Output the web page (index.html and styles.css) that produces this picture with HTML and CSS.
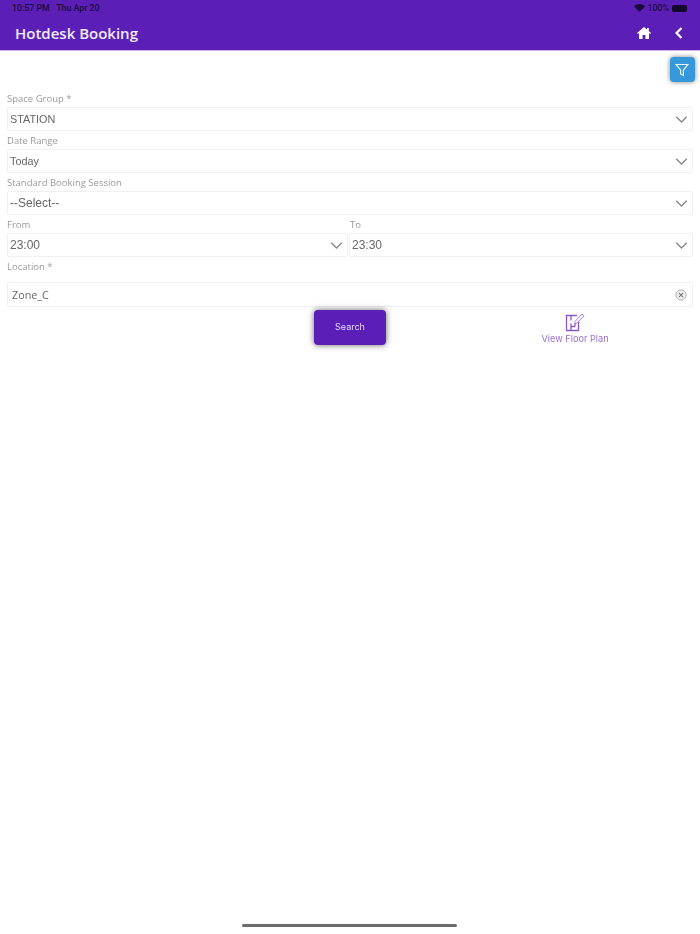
FILE: index.html
```html
<!DOCTYPE html>
<html lang="en">
<head>
  <meta charset="UTF-8">
  <meta name="viewport" content="width=device-width, initial-scale=1.0">
  <title>Hotdesk Booking</title>
  <link rel="stylesheet" href="styles.css">
</head>
<body>
  <div class="page">
    <header class="header">
      <div class="status">
        <span>10:57 PM&nbsp;&nbsp; Thu Apr 20</span>
        <span class="status-right">
          <svg class="wifi" width="11" height="8" viewBox="0 0 11 8"><path d="M5.500 8 0 2.400C3.200-.8 7.800-.8 11 2.400z" fill="#1c0b3c"/></svg>
          <span>100%</span>
          <span class="battery"></span>
        </span>
      </div>
      <div class="title-row">
        <h1>Hotdesk Booking</h1>
        <div class="header-icons">
          <svg width="14" height="12" viewBox="0 0 14 12"><path d="M7 0 0 6l.8 1L2 6v6h3.600V8h2.800v4H12V6l1.200 1 .8-1-2.200-1.900V1h-1.800v1.500z" fill="#fff"/></svg>
          <svg width="8" height="12" viewBox="0 0 8 12"><path d="M6.500 1 1.500 6l5 5" fill="none" stroke="#fff" stroke-width="2.200"/></svg>
        </div>
      </div>
    </header>

    <div class="filter-row">
      <button class="filter-btn">
        <svg width="14" height="14" viewBox="0 0 14 14"><path d="M1 1.500h12L8.400 7v5.500L5.600 11V7z" fill="none" stroke="#e8f4fc" stroke-width="1.200"/></svg>
      </button>
    </div>

    <form class="form">
      <label class="label">Space Group *</label>
      <div class="select"><span>STATION</span><svg class="chev" width="13" height="7" viewBox="0 0 12 7"><path d="m.8.8 5.200 5.200L11.200.8" fill="none" stroke="#888" stroke-width="1.400"/></svg></div>

      <label class="label">Date Range</label>
      <div class="select"><span>Today</span><svg class="chev" width="13" height="7" viewBox="0 0 12 7"><path d="m.8.8 5.200 5.200L11.200.8" fill="none" stroke="#888" stroke-width="1.400"/></svg></div>

      <label class="label">Standard Booking Session</label>
      <div class="select select-large"><span>--Select--</span><svg class="chev" width="13" height="7" viewBox="0 0 12 7"><path d="m.8.8 5.200 5.200L11.200.8" fill="none" stroke="#888" stroke-width="1.400"/></svg></div>

      <div class="time-row">
        <div>
          <label class="label">From</label>
          <div class="select select-large"><span>23:00</span><svg class="chev" width="13" height="7" viewBox="0 0 12 7"><path d="m.8.8 5.200 5.200L11.200.8" fill="none" stroke="#888" stroke-width="1.400"/></svg></div>
        </div>
        <div>
          <label class="label label-to">To</label>
          <div class="select select-large"><span>23:30</span><svg class="chev" width="13" height="7" viewBox="0 0 12 7"><path d="m.8.8 5.200 5.200L11.200.8" fill="none" stroke="#888" stroke-width="1.400"/></svg></div>
        </div>
      </div>

      <label class="label label-location">Location *</label>
      <div class="location">
        <span>Zone_C</span>
        <svg width="12" height="12" viewBox="0 0 13 13"><circle cx="6.500" cy="6.500" r="5.500" fill="#f2f2f2" stroke="#aaa"/><path d="m4.200 4.200 4.600 4.600m0-4.600-4.600 4.600" stroke="#777" stroke-width="1.200"/></svg>
      </div>
    </form>

    <div class="actions">
      <div class="action-cell"><button class="search-btn">Search</button></div>
      <div class="floor-plan">
        <svg width="20" height="20" viewBox="0 0 20 19"><path d="M12 3H1.500v15h12V9" fill="none" stroke="#8a57c8" stroke-width="1.300"/><path d="M6 3v5m0 3v7m0-4h4m0-3v3" fill="none" stroke="#8a57c8" stroke-width="1.300"/><path d="m10 9 7-7.500 2 1.800-7 7.200-2.500.7z" fill="none" stroke="#a67fd8" stroke-width="1"/></svg>
        <span>View Floor Plan</span>
      </div>
    </div>

    <div class="home-bar"></div>
  </div>
</body>
</html>
```

FILE: styles.css
```css
html, body {
  margin: 0;
  padding: 0;
  background: #fff;
}
.page {
  width: 700px;
  height: 934px;
  position: relative;
  overflow: hidden;
  font-family: "Open Sans", sans-serif;
  filter: blur(0.6px);
}
.header {
  height: 50px;
  background-color: #5b1fb8;
  border-bottom: 1px solid #c9b3e8;
}
.status {
  height: 16px;
  padding: 0 13px 0 12px;
  display: flex;
  justify-content: space-between;
  align-items: center;
  font-family: Roboto, sans-serif;
  font-size: 8.8px;
  font-weight: 500;
  color: #1c0b3c;
}
.status-right {
  display: flex;
  align-items: center;
  gap: 3px;
}
.battery {
  width: 15px;
  height: 7px;
  border-radius: 2px;
  background: #14082c;
}
.title-row {
  height: 34px;
  padding: 0 16px 0 15px;
  display: flex;
  justify-content: space-between;
  align-items: center;
}
h1 {
  margin: 0;
  font-size: 15px;
  font-weight: 600;
  color: #f1ebfa;
}
.header-icons {
  display: flex;
  align-items: center;
  gap: 24px;
  padding-right: 1px;
}
.filter-row {
  height: 41px;
  padding: 6px 5px 0 0;
  display: flex;
  justify-content: flex-end;
  box-sizing: border-box;
}
.filter-btn {
  width: 25px;
  height: 25px;
  padding: 0 1px 0 0;
  border: none;
  border-radius: 4px;
  background: #3498db;
  box-shadow: 0 0 5px rgba(0, 0, 0, 0.5);
  display: flex;
  align-items: center;
  justify-content: center;
}
.form {
  padding: 0 7px;
}
.label {
  display: block;
  height: 15px;
  line-height: 13px;
  font-size: 9.5px;
  color: #9a9a9a;
}
.label-to {
  padding-left: 1px;
}
.select {
  height: 24px;
  box-sizing: border-box;
  margin-bottom: 3px;
  padding: 0 4px 0 2px;
  border: 1px solid #f0f0f0;
  border-radius: 2px;
  display: flex;
  justify-content: space-between;
  align-items: center;
  font-family: "Liberation Sans", sans-serif;
  font-size: 10.8px;
  color: #666;
}
.select-large {
  font-size: 12px;
}
.time-row {
  display: grid;
  grid-template-columns: 341px 1fr;
  gap: 1px;
}
.label-location {
  margin-bottom: 7px;
}
.location {
  height: 25px;
  box-sizing: border-box;
  padding: 0 5px 0 4px;
  border: 1px solid #f0f0f0;
  border-radius: 2px;
  display: flex;
  justify-content: space-between;
  align-items: center;
  font-size: 10.8px;
  color: #666;
}
.actions {
  display: grid;
  grid-template-columns: 1fr 1fr;
  margin-top: 3px;
}
.action-cell {
  display: flex;
  justify-content: flex-end;
}
.search-btn {
  width: 72px;
  height: 35px;
  margin-right: -36px;
  padding: 0 0 2px;
  border: none;
  border-radius: 4px;
  background: #5b1fb8;
  box-shadow: 0 0 6px rgba(0, 0, 0, 0.6);
  color: #e6dcf5;
  font-family: Inter, sans-serif;
  font-size: 9px;
}
.floor-plan {
  margin-left: 191px;
  width: 68px;
  padding-top: 2px;
  display: flex;
  flex-direction: column;
  align-items: center;
  gap: 1px;
  color: #9a6fd0;
  font-family: Inter, sans-serif;
  font-size: 9.2px;
  line-height: 11px;
}
.home-bar {
  position: absolute;
  left: 242px;
  top: 924px;
  width: 215px;
  height: 3px;
  border-radius: 2px;
  background: #6b6b6b;
}
```
